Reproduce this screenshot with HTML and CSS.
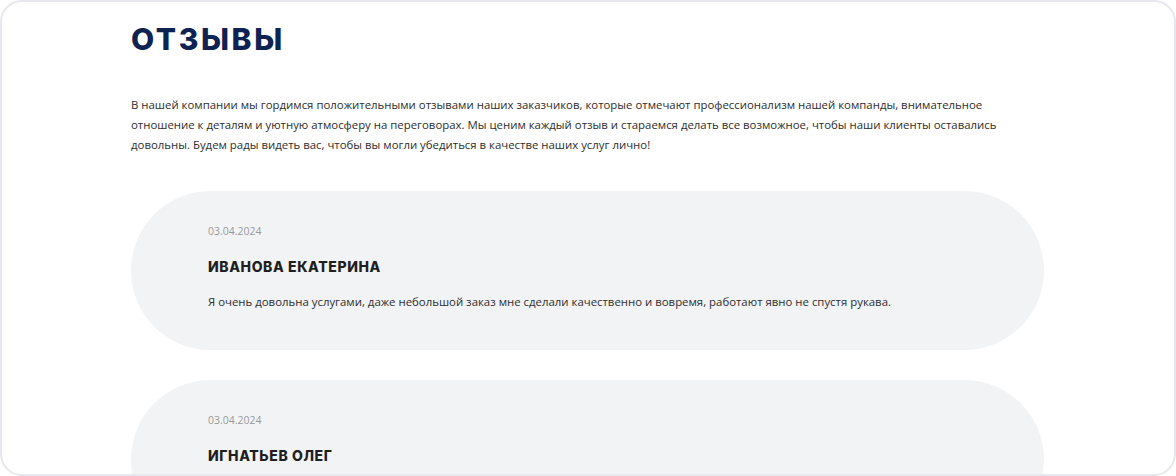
FILE: index.html
```html
<!DOCTYPE html>
<html lang="ru">
<head>
<meta charset="utf-8">
<title>Отзывы</title>
<link rel="stylesheet" href="styles.css">
</head>
<body>
<div class="frame">
  <section class="reviews">
    <h1 class="title">ОТЗЫВЫ</h1>
    <p class="intro">В нашей компании мы гордимся положительными отзывами наших заказчиков, которые отмечают профессионализм нашей компанды, внимательное отношение к деталям и уютную атмосферу на переговорах. Мы ценим каждый отзыв и стараемся делать все возможное, чтобы наши клиенты оставались довольны. Будем рады видеть вас, чтобы вы могли убедиться в качестве наших услуг лично!</p>
    <div class="list">
      <article class="card">
        <div class="date">03.04.2024</div>
        <h3 class="name">ИВАНОВА ЕКАТЕРИНА</h3>
        <p class="text">Я очень довольна услугами, даже небольшой заказ мне сделали качественно и вовремя, работают явно не спустя рукава.</p>
      </article>
      <article class="card">
        <div class="date">03.04.2024</div>
        <h3 class="name">ИГНАТЬЕВ ОЛЕГ</h3>
      </article>
    </div>
  </section>
</div>
</body>
</html>
```
FILE: styles.css
```css
html, body {
  margin: 0;
  padding: 0;
  background: #ffffff;
}
.frame {
  box-sizing: border-box;
  width: 1176px;
  height: 476px;
  border: 2px solid #e7e8ee;
  border-radius: 22px;
  overflow: hidden;
  background: #ffffff;
}
.reviews {
  width: 913px;
  margin-left: 129px;
  padding-top: 15px;
}
.title {
  margin: 0;
  font-family: "Inter", "Open Sans", sans-serif;
  font-weight: 800;
  font-size: 30px;
  line-height: 44px;
  color: #0e2352;
  letter-spacing: 2.6px;
}
.intro {
  margin: 34px 0 0;
  font-family: "Open Sans", sans-serif;
  font-size: 11.4px;
  line-height: 20px;
  color: #2e2e2e;
}
.list {
  margin-top: 36px;
  display: flex;
  flex-direction: column;
  gap: 30px;
}
.card {
  box-sizing: border-box;
  height: 159px;
  border-radius: 80px;
  background: #f2f3f5;
  padding: 32px 77px 0;
}
.date {
  font-family: "Open Sans", sans-serif;
  font-size: 10.5px;
  line-height: 16px;
  color: #9a9a9a;
}
.name {
  margin: 18px 0 0;
  font-family: "Inter", "Open Sans", sans-serif;
  font-weight: 800;
  font-size: 14px;
  line-height: 20px;
  color: #1f1f1f;
  letter-spacing: 0.6px;
}
.text {
  margin: 15px 0 0;
  font-family: "Open Sans", sans-serif;
  font-size: 11.4px;
  line-height: 20px;
  color: #2e2e2e;
}
```
